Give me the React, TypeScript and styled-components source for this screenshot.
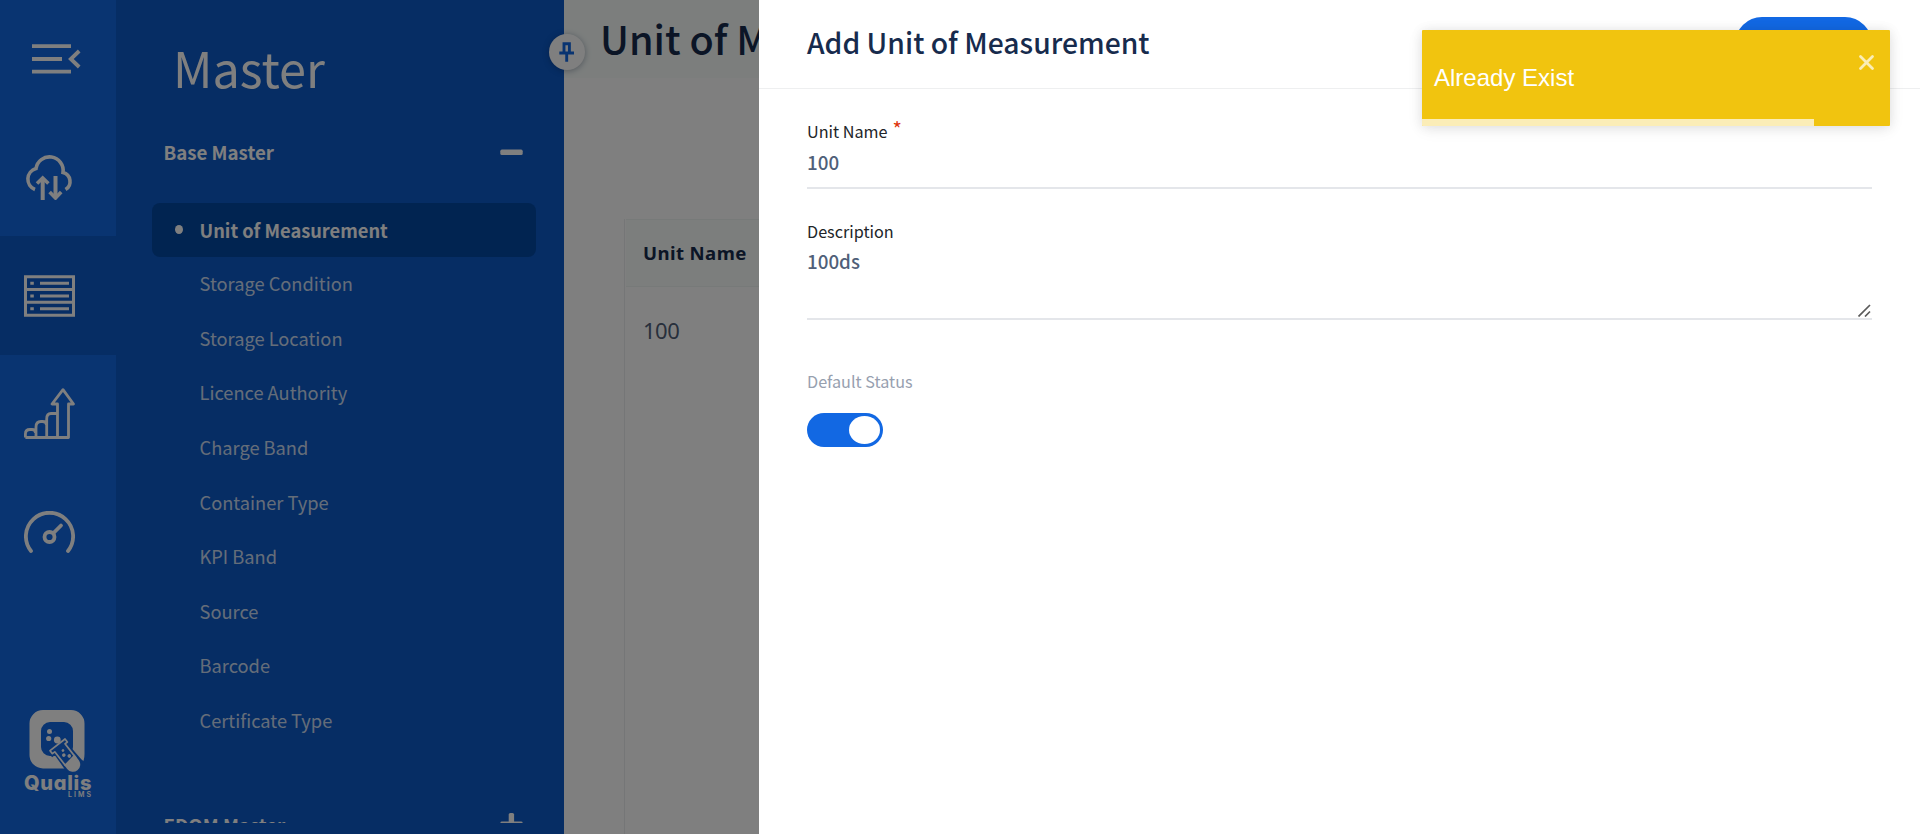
import React from "react";
import styled, { createGlobalStyle } from "styled-components";

const sans = `"Source Sans Pro", "Noto Sans CJK SC", sans-serif`;

const GlobalStyle = createGlobalStyle`
  * { box-sizing: border-box; }
  body { margin: 0; font-family: ${sans}; background: #fff; overflow: hidden; }
`;

const Page = styled.div`
  display: flex;
  width: 100%;
  height: 834px;
  overflow: hidden;
`;

const Rail = styled.nav`
  display: flex;
  flex-direction: column;
  width: 116px;
  height: 100%;
  background: #1268e3;
`;

const RailCell = styled.div<{ $active?: boolean; $height?: number }>`
  display: flex;
  align-items: center;
  padding-left: 24px;
  height: ${(p) => p.$height ?? 119}px;
  background: ${(p) => (p.$active ? "#0c5ac8" : "transparent")};
`;

const MenuToggle = styled(RailCell)`
  padding-left: 32px;
`;

const Brand = styled.div`
  margin-top: auto;
  padding-left: 24px;
  height: 124px;
  color: #fff;
`;

const BrandMark = styled.svg`
  display: block;
  margin-left: 5px;
`;

const BrandName = styled.div`
  font: 800 20px/20px "Inter", sans-serif;
  font-feature-settings: "cv11", "ss03";
  letter-spacing: 0.7px;
`;

const BrandSub = styled.div`
  width: 69px;
  margin-top: -2px;
  text-align: right;
  font: 600 7px/8px "Inter", sans-serif;
  letter-spacing: 2px;
`;

const Panel = styled.aside`
  display: flex;
  flex-direction: column;
  width: 448px;
  height: 823px;
  padding: 0 28px 0 36px;
  overflow: hidden;
  color: #fff;
`;

const PanelBack = styled.div`
  position: relative;
  width: 448px;
  height: 100%;
  background: #0c5ac8;
`;

const PanelTitle = styled.h1`
  flex: none;
  margin: 32px 0 20px 21px;
  font-size: 48.6px;
  line-height: 70px;
  font-weight: 400;
`;

const GroupHeader = styled.div`
  display: flex;
  flex: none;
  align-items: center;
  justify-content: space-between;
  height: 60px;
  padding: 0 13px 0 11.5px;
  font-size: 18.7px;
  line-height: 28px;
  font-weight: 700;
`;

const MenuList = styled.ul`
  flex: none;
  list-style: none;
  margin: 21px 0 46.6px;
  padding: 0;
`;

const MenuItem = styled.li<{ $active?: boolean }>`
  display: flex;
  align-items: center;
  height: ${(p) => (p.$active ? 54 : 54.6)}px;
  padding-left: ${(p) => (p.$active ? 23 : 47.5)}px;
  padding-bottom: ${(p) => (p.$active ? 0.5 : 2)}px;
  border-radius: 8px;
  font-size: 18.25px;
  line-height: 28px;
  font-weight: ${(p) => (p.$active ? 700 : 400)};
  color: ${(p) => (p.$active ? "#fff" : "rgba(255,255,255,0.8)")};
  background: ${(p) => (p.$active ? "#0348a3" : "transparent")};
`;

const Bullet = styled.span`
  width: 8px;
  height: 9px;
  margin-right: 16.5px;
  border-radius: 50%;
  background: #fff;
`;

const PinButton = styled.button`
  position: absolute;
  z-index: 1;
  right: -21px;
  top: 34px;
  display: flex;
  align-items: center;
  justify-content: center;
  width: 36px;
  height: 36px;
  padding: 0 1px 1px 0;
  border: 0;
  border-radius: 50%;
  background: #fff;
  box-shadow: 0 1px 6px rgba(9, 30, 66, 0.35);
`;

const Main = styled.main`
  flex: 1;
  min-width: 0;
  height: 100%;
`;

const MainHeader = styled.header`
  height: 78px;
  padding: 9px 0 0 36px;
  background: #f8fdfb;
  color: #172b4d;
  font-size: 39.5px;
  line-height: 58px;
  font-weight: 500;
  white-space: nowrap;
`;

const Grid = styled.div`
  height: 640px;
  margin: 141px 40px 0 60px;
  border-left: 1px solid #ebecee;
`;

const GridHead = styled.div`
  height: 68px;
  margin-left: 1px;
  padding-left: 17px;
  border: solid #eef4f2;
  border-width: 1px 0;
  background: #f8fdfb;
  color: #172b4d;
  font: 700 18.6px/66px "Noto Sans", sans-serif;
  letter-spacing: 0.4px;
`;

const GridCell = styled.div`
  padding: 23px 0 0 18px;
  color: #505f79;
  font: 400 22px/40px "Noto Sans", sans-serif;
  letter-spacing: -0.5px;
`;

const Backdrop = styled.div`
  position: fixed;
  inset: 0;
  z-index: 2;
  background: rgba(0, 0, 0, 0.5);
`;

const Drawer = styled.section`
  position: fixed;
  z-index: 3;
  top: 0;
  right: 0;
  bottom: 0;
  width: 1161px;
  background: #fff;
`;

const DrawerHeader = styled.header`
  display: flex;
  justify-content: space-between;
  height: 89px;
  padding: 17px 48px 0;
  border-bottom: 1px solid #eeeff0;
`;

const DrawerTitle = styled.h2`
  margin: 4px 0 0;
  color: #172b4d;
  font-size: 28.3px;
  line-height: 42px;
  font-weight: 500;
`;

const SaveButton = styled.button`
  width: 137px;
  height: 54px;
  border: 0;
  border-radius: 27px;
  background: #1268e3;
`;

const Form = styled.div`
  padding: 30px 48px 0;
`;

const Label = styled.label<{ $muted?: boolean }>`
  display: flex;
  height: 24px;
  font-size: 16.2px;
  line-height: 24px;
  color: ${(p) => (p.$muted ? "#97a0af" : "#212529")};
`;

const Required = styled.sup`
  margin-left: 5px;
  color: #de350b;
  font-size: 20px;
  line-height: 19px;
`;

const Value = styled.div<{ $height: number }>`
  display: flex;
  justify-content: space-between;
  height: ${(p) => p.$height}px;
  margin-bottom: 30px;
  border-bottom: 2px solid #e4e6ea;
  color: #505f79;
  font-size: 18.8px;
  line-height: 28px;
  font-weight: 500;
  padding-top: ${(p) => (p.$height > 60 ? 4 : 5)}px;
`;

const ResizeGrip = styled.svg`
  align-self: flex-end;
  margin: 0 1px 1px 0;
`;

const Switch = styled.div`
  display: flex;
  justify-content: flex-end;
  width: 76px;
  height: 34px;
  margin-top: 20px;
  padding: 3px;
  border-radius: 17px;
  background: #1268e3;
`;

const Knob = styled.span`
  width: 31px;
  height: 28px;
  border-radius: 50%;
  background: #fff;
`;

const StatusField = styled.div`
  padding-top: 19px;
`;

const Toast = styled.div`
  position: fixed;
  z-index: 4;
  top: 30px;
  right: 30px;
  display: flex;
  flex-direction: column;
  justify-content: space-between;
  width: 468px;
  height: 96px;
  border-radius: 1px;
  overflow: hidden;
  background: #f1c40f;
  color: #fff;
  box-shadow: 0 1px 12px rgba(0, 0, 0, 0.1), 0 3px 18px rgba(0, 0, 0, 0.06);
`;

const ToastBody = styled.div`
  display: flex;
  justify-content: space-between;
  padding: 24px 15px 0 12px;
  font: 400 24px/48px "Liberation Sans", Arial, sans-serif;
`;

const Progress = styled.div`
  width: 392px;
  height: 7px;
  background: rgba(255, 255, 255, 0.7);
`;

const items = [
  "Unit of Measurement",
  "Storage Condition",
  "Storage Location",
  "Licence Authority",
  "Charge Band",
  "Container Type",
  "KPI Band",
  "Source",
  "Barcode",
  "Certificate Type",
];

const MenuIcon = () => (
  <svg width="49" height="30" viewBox="0 0 49 30" fill="none" stroke="#fff" strokeWidth="3.8">
    <path d="M0 2.200H39M0 15H30M0 27.700H39M47.200 7L38.800 15l8.400 8" />
  </svg>
);

const CloudIcon = () => (
  <svg width="51" height="46" viewBox="0 0 51 46" fill="none" stroke="#fff" strokeWidth="3.6">
    <path d="M11 35.500A11 11 0 0 1 12 14.600A13.400 13.400 0 0 1 39 18.500A9.300 9.300 0 0 1 41.500 35.500" />
    <path strokeWidth="4" d="M18.700 46V25M31.500 22V43" />
    <path d="M13 29.500L18.700 24l5.700 5.500M25.600 38l5.900 6 5.700-6" />
  </svg>
);

const ServerIcon = () => (
  <svg width="51" height="42" viewBox="0 0 51 42" fill="none" stroke="#fff" strokeWidth="3">
    <path d="M1.500 1.700H49.500V40.300H1.500zM1.500 14.500H49.500M1.500 27.300H49.500" />
    <path d="M6.300 8.200h3.500M16 8.200h29M6.300 20.900h3.500M16 20.900h29M6.300 33.700h3.500M16 33.700h29" />
  </svg>
);

const GrowthIcon = () => (
  <svg width="51" height="51" viewBox="0 0 51 51" fill="none" stroke="#fff" strokeWidth="2.8" strokeLinejoin="round">
    <path d="M1.400 49.500H44.500V16H49.500L39 1.700 28 16H33.500V49.500" />
    <path d="M1.400 49.500V46Q1.400 41.500 6 41.500H8Q11.500 41.500 11.500 45M12 49.500V39Q12 33.500 17 33.500H18.500Q22.500 33.500 22.500 37M22.700 49.500V31Q22.700 25.500 27 25.500H33" />
  </svg>
);

const GaugeIcon = () => (
  <svg width="51" height="42" viewBox="0 0 51 42" fill="none" stroke="#fff" strokeWidth="3.800" strokeLinecap="round">
    <path d="M7 40A23.600 23.600 0 1 1 44 40" />
    <circle cx="25.500" cy="26" r="5" />
    <path d="M29.500 22L37 14.500" />
  </svg>
);

const LogoIcon = () => (
  <BrandMark width="56" height="63" viewBox="0 0 56 63">
    <path
      fill="#fff"
      fillRule="evenodd"
      d="M14 0H42A13.500 13.500 0 0 1 55.500 14V44Q55.500 58.500 41 58.500H14A13.500 13.500 0 0 1 .5 44.500V14A13.500 13.500 0 0 1 14 0zM21 12A9 9 0 0 0 12 21V37A9 9 0 0 0 21 46H35A9 9 0 0 0 44 37V21A9 9 0 0 0 35 12z"
    />
    <g transform="translate(31 38) rotate(-38)">
      <path fill="#1268e3" d="M-12-5.500H11.500V2.500H8.800L9.800 22L12 32H-10L-8.500 2.500H-12z" />
      <path fill="none" stroke="#fff" strokeWidth="1.700" d="M-9.500-4H9.500V-.2H6.500V17H-6.500V-.2H-9.500z" strokeLinejoin="round" />
      <path fill="#fff" d="M-7.300 16L7.300 14V21A7.300 7.300 0 0 1-7.300 21z" />
      <circle cx="0.800" cy="3.800" r="1.400" fill="#fff" />
      <circle cx="-1.400" cy="8" r="1.800" fill="#fff" />
      <circle cx="2.400" cy="12" r="1.800" fill="#fff" />
    </g>
    <g fill="#fff">
      <circle cx="20.500" cy="21.500" r="2.500" />
      <circle cx="19.700" cy="28.500" r="2.600" />
      <circle cx="28.300" cy="30" r="3.400" />
    </g>
  </BrandMark>
);

const Minus = () => (
  <svg width="23" height="23" viewBox="0 0 23 23" fill="#fff">
    <rect x="0.300" y="8.600" width="22.400" height="5.400" rx="1.600" />
  </svg>
);

const Plus = () => (
  <svg width="23" height="23" viewBox="0 0 23 23" fill="#fff">
    <rect x="0.300" y="8.600" width="22.400" height="5.400" rx="1.600" />
    <rect x="8.700" y="0" width="5.400" height="22.400" rx="1.600" />
  </svg>
);

const PinIcon = () => (
  <svg width="16" height="20" viewBox="0 0 16 20" fill="none" stroke="#1268e3" strokeWidth="2.900">
    <path d="M5 11V1.800H10.400V11M.3 11H15M7.700 11V19.800" />
  </svg>
);

export default function App() {
  return (
    <>
      <GlobalStyle />
      <Page>
        <Rail>
          <MenuToggle $height={118}><MenuIcon /></MenuToggle>
          <RailCell $height={118}><CloudIcon /></RailCell>
          <RailCell $active><ServerIcon /></RailCell>
          <RailCell $height={117}><GrowthIcon /></RailCell>
          <RailCell $height={119}><GaugeIcon /></RailCell>
          <Brand>
            <LogoIcon />
            <BrandName>Qualis</BrandName>
            <BrandSub>LIMS</BrandSub>
          </Brand>
        </Rail>
        <PanelBack>
          <Panel>
            <PanelTitle>Master</PanelTitle>
            <GroupHeader>
              Base Master
              <Minus />
            </GroupHeader>
            <MenuList>
              {items.map((name, i) => (
                <MenuItem key={name} $active={i === 0}>
                  {i === 0 && <Bullet />}
                  {name}
                </MenuItem>
              ))}
            </MenuList>
            <GroupHeader>
              EDQM Master
              <Plus />
            </GroupHeader>
          </Panel>
          <PinButton aria-label="Pin menu"><PinIcon /></PinButton>
        </PanelBack>
        <Main>
          <MainHeader>Unit of Measurement</MainHeader>
          <Grid>
            <GridHead>Unit Name</GridHead>
            <GridCell>100</GridCell>
          </Grid>
        </Main>
      </Page>
      <Backdrop />
      <Drawer>
        <DrawerHeader>
          <DrawerTitle>Add Unit of Measurement</DrawerTitle>
          <SaveButton aria-label="Save" />
        </DrawerHeader>
        <Form>
          <Label>Unit Name<Required>*</Required></Label>
          <Value $height={46}>100</Value>
          <Label>Description</Label>
          <Value $height={77}>
            100ds
            <ResizeGrip width="13" height="13" viewBox="0 0 13 13" stroke="#5a5a5a" strokeWidth="1.700">
              <path d="M.5 12.500L12 1M7 12.500L12 7.500" />
            </ResizeGrip>
          </Value>
          <StatusField>
            <Label $muted>Default Status</Label>
            <Switch><Knob /></Switch>
          </StatusField>
        </Form>
      </Drawer>
      <Toast>
        <ToastBody>
          Already Exist
          <svg width="17" height="17" viewBox="0 0 17 17" stroke="#fff" strokeWidth="2.800" strokeLinecap="round" opacity="0.700">
            <path d="M2.500 2.500L14.500 14.500M14.500 2.500L2.500 14.500" />
          </svg>
        </ToastBody>
        <Progress />
      </Toast>
    </>
  );
}
